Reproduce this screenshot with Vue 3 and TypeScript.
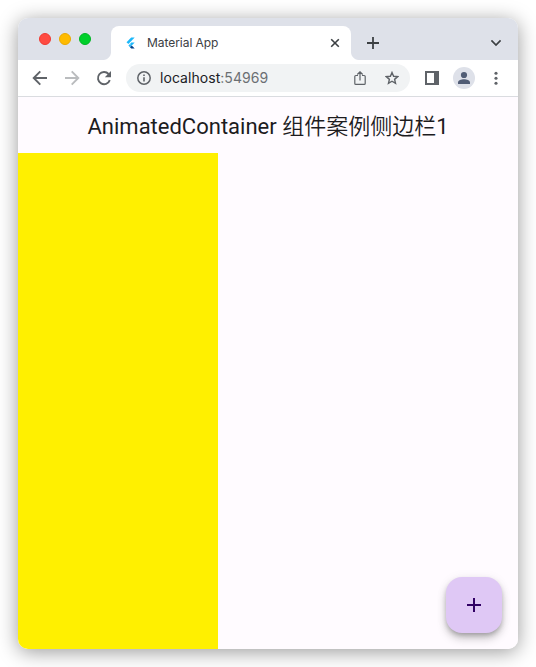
<script setup lang="ts">
import { ref } from 'vue'

const lights = ['red', 'amber', 'green']
const expanded = ref(false)
</script>

<template>
  <div class="desktop">
    <div class="window">
      <header class="tabs">
        <div class="lights">
          <i v-for="c in lights" :key="c" :class="['light', c]"></i>
        </div>
        <div class="tab">
          <svg class="logo" width="12" height="12" viewBox="0 0 12 12">
            <path d="M6.200 .4h3.500L3.400 6.900 1.500 5.200z" fill="#1cb8fa" />
            <path d="M6.200 5.400h3.500L6.800 8.400 5 6.900z" fill="#1cb8fa" />
            <path d="M3.400 8.500 5 6.900l1.800 1.600L5 10.200z" fill="#29b6f6" />
            <path d="M5 10.200 6.800 8.500l2.900 2.900H6.200z" fill="#01408b" />
          </svg>
          <span class="tab-title">Material App</span>
          <svg class="close" width="10" height="10" viewBox="0 0 10 10">
            <path d="M1.200 1.200l7.600 7.600M8.800 1.200L1.200 8.800" fill="none" stroke="#3c4043" stroke-width="1.600" />
          </svg>
        </div>
        <svg class="new-tab" width="12" height="12" viewBox="0 0 12 12">
          <path d="M6 0v12M0 6h12" stroke="#3c4043" stroke-width="1.800" />
        </svg>
        <svg class="chevron" width="12" height="8" viewBox="0 0 12 8">
          <path d="M1.400 1.400L6 6l4.600-4.600" fill="none" stroke="#3c4043" stroke-width="1.700" />
        </svg>
      </header>

      <nav class="toolbar">
        <svg class="nav-icon" width="16" height="16" viewBox="0 0 16 16">
          <path d="M15 8H2M8.300 1.400L1.700 8l6.600 6.600" fill="none" stroke="#5f6368" stroke-width="1.900" />
        </svg>
        <svg class="nav-icon" width="16" height="16" viewBox="0 0 16 16">
          <path d="M1 8h13M7.700 1.400L14.300 8l-6.600 6.600" fill="none" stroke="#babcbe" stroke-width="1.900" />
        </svg>
        <svg class="nav-icon" width="16" height="16" viewBox="0 0 16 16">
          <path d="M13.800 10.200A6.100 6.100 0 1 1 12.600 4" fill="none" stroke="#5f6368" stroke-width="1.900" />
          <path d="M15 1v6.200H8.800z" fill="#5f6368" />
        </svg>
        <div class="omnibox">
          <svg width="14" height="14" viewBox="0 0 14 14">
            <circle cx="7" cy="7" r="6.200" fill="none" stroke="#5f6368" stroke-width="1.500" />
            <path d="M7 6.200v4.300M7 3.400v1.600" stroke="#5f6368" stroke-width="1.600" />
          </svg>
          <span class="url">localhost<span class="port">:54969</span></span>
          <svg class="share" width="12" height="14" viewBox="0 0 12 14">
            <path
              d="M4 4.500H1.800a1 1 0 0 0-1 1v6.900a1 1 0 0 0 1 1h8.400a1 1 0 0 0 1-1V5.500a1 1 0 0 0-1-1H8M6 9.500V1M3.300 3.500L6 .8l2.700 2.700"
              fill="none" stroke="#5f6368" stroke-width="1.200"
            />
          </svg>
          <svg width="14" height="14" viewBox="0 0 14 14">
            <path
              d="M7 1.500l1.600 3.800 4.100.35-3.100 2.700.93 4L7 10.200l-3.530 2.150.93-4-3.100-2.700 4.100-.35z"
              fill="none" stroke="#5f6368" stroke-width="1.400"
            />
          </svg>
        </div>
        <svg class="panel" width="14" height="14" viewBox="0 0 14 14">
          <path d="M0 0h14v14H0zM2 2v10h7V2z" fill="#5f6368" fill-rule="evenodd" />
        </svg>
        <svg class="avatar" width="22" height="22" viewBox="0 0 22 22">
          <circle cx="11" cy="11" r="11" fill="#dee1e9" />
          <circle cx="11" cy="8" r="3.100" fill="#515d75" />
          <path d="M5 17v-1.500C5 13.400 8.400 12.300 11 12.300s6 1.100 6 3.200V17z" fill="#515d75" />
        </svg>
        <svg class="more" width="4" height="14" viewBox="0 0 4 14">
          <circle cx="2" cy="2.200" r="1.550" fill="#5f6368" />
          <circle cx="2" cy="7.200" r="1.550" fill="#5f6368" />
          <circle cx="2" cy="12.200" r="1.550" fill="#5f6368" />
        </svg>
      </nav>

      <main class="page">
        <h1 class="app-bar">AnimatedContainer <span class="cjk">组件案例侧边栏</span>1</h1>
        <div class="body">
          <div :class="['sidebar', { expanded }]"></div>
          <button class="fab" type="button" @click="expanded = !expanded">
            <svg width="14" height="14" viewBox="0 0 14 14">
              <path d="M7 0v14M0 7h14" stroke="#310065" stroke-width="2" />
            </svg>
          </button>
        </div>
      </main>
    </div>
  </div>
</template>

<style>
body {
  background: #fff;
}
</style>

<style scoped>
.desktop {
  box-sizing: border-box;
  height: 667px;
  padding: 18px;
  overflow: hidden;
  font-family: Inter, "Liberation Sans", sans-serif;
}
.window {
  display: flex;
  flex-direction: column;
  height: 631px;
  border-radius: 10px;
  overflow: hidden;
  background: #fff;
  box-shadow: 0 3px 20px rgba(0, 0, 0, 0.4);
}
.tabs {
  display: flex;
  box-sizing: border-box;
  height: 42px;
  padding: 8px 16px 0 21px;
  background: #dee1e9;
}
.lights {
  display: flex;
  gap: 8px;
  width: 72px;
  padding-top: 7px;
}
.light {
  box-sizing: border-box;
  width: 12px;
  height: 12px;
  border-radius: 50%;
}
.red {
  background: #ff4b42;
  border: 1px solid #f03a32;
}
.amber {
  background: #ffbb00;
  border: 1px solid #eaa900;
}
.green {
  background: #00d02b;
  border: 1px solid #00b524;
}
.tab {
  position: relative;
  display: flex;
  align-items: center;
  box-sizing: border-box;
  width: 240px;
  height: 34px;
  padding: 0 11px 0 14px;
  border-radius: 8px 8px 0 0;
  background: #fff;
}
.tab::before,
.tab::after {
  content: "";
  position: absolute;
  bottom: 0;
  width: 8px;
  height: 8px;
}
.tab::before {
  left: -8px;
  background: radial-gradient(circle at 0 0, transparent 7.5px, #fff 8.5px);
}
.tab::after {
  right: -8px;
  background: radial-gradient(circle at 100% 0, transparent 7.5px, #fff 8.5px);
}
.tab-title {
  flex: 1;
  margin-left: 10px;
  font-size: 12px;
  line-height: 16px;
  letter-spacing: -0.05px;
  color: #3c4043;
}
.new-tab {
  margin: 11px 0 0 16px;
}
.chevron {
  margin: 13px 0 0 auto;
}
.toolbar {
  display: flex;
  align-items: center;
  box-sizing: border-box;
  height: 37px;
  padding: 0 20px 0 14px;
  border-bottom: 1px solid #dadce0;
}
.nav-icon {
  margin-right: 16px;
}
.omnibox {
  display: flex;
  align-items: center;
  box-sizing: border-box;
  width: 284px;
  height: 28px;
  margin-left: -2px;
  padding: 0 11px;
  border-radius: 14px;
  background: #f1f3f4;
}
.url {
  flex: 1;
  margin-left: 9px;
  font-size: 14px;
  line-height: 20px;
  letter-spacing: 0.05px;
  color: #202124;
}
.port {
  color: #6b6f73;
}
.share {
  margin-right: 19px;
}
.panel {
  margin-left: 15px;
}
.avatar {
  margin-left: 14px;
}
.more {
  margin-left: auto;
}
.page {
  display: flex;
  flex: 1;
  flex-direction: column;
  background: #fffbff;
}
.app-bar {
  height: 56px;
  margin: 0;
  font-size: 22px;
  font-weight: 400;
  line-height: 60px;
  text-align: center;
  white-space: nowrap;
  color: #1d1b1e;
  font-family: Roboto, "Noto Sans CJK SC", sans-serif;
}
.cjk {
  font-family: "Noto Sans CJK SC DemiLight", "Noto Sans CJK SC", sans-serif;
  font-weight: 350;
  line-height: 1;
}
.body {
  display: flex;
  flex: 1;
  align-items: flex-end;
  justify-content: space-between;
}
.sidebar {
  align-self: stretch;
  width: 200px;
  background: #fff000;
  transition: width 0.5s;
}
.sidebar.expanded {
  width: 260px;
}
.fab {
  display: grid;
  place-items: center;
  width: 56px;
  height: 56px;
  margin: 0 16px 16px 0;
  padding: 0;
  border: 0;
  border-radius: 16px;
  background: #dfc8f5;
  box-shadow: 0 3px 5px -1px rgba(0, 0, 0, 0.24), 0 6px 10px rgba(0, 0, 0, 0.18), 0 1px 12px rgba(0, 0, 0, 0.06);
}
</style>
